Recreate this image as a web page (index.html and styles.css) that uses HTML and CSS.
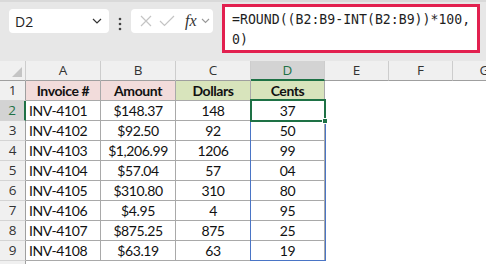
FILE: index.html
```html
<!DOCTYPE html>
<html lang="en">
<head>
    <meta charset="UTF-8">
    <meta name="viewport" content="width=device-width, initial-scale=1.0">
    <title>Cents from Amount</title>
    <link rel="stylesheet" href="styles.css">
</head>
<body>
    <div class="top-edge"></div>

    <div class="formula-bar">
        <div class="name-box">
            <span>D2</span>
            <svg class="chevron" width="10" height="6" viewBox="0 0 10 6"><path d="M1 1 L5 5 L9 1" fill="none" stroke="#333" stroke-width="1.2"/></svg>
        </div>
        <svg class="grip" width="4" height="14" viewBox="0 0 4 14">
            <circle cx="2" cy="2" r="1.3" fill="#444"/>
            <circle cx="2" cy="7" r="1.3" fill="#444"/>
            <circle cx="2" cy="12" r="1.3" fill="#444"/>
        </svg>
        <div class="fx-box">
            <svg width="12" height="12" viewBox="0 0 12 12"><path d="M1 1 L11 11 M11 1 L1 11" stroke="#c4c4c4" stroke-width="1.2"/></svg>
            <svg width="16" height="12" viewBox="0 0 16 12"><path d="M1 6 L5.5 10.5 L15 1" fill="none" stroke="#c4c4c4" stroke-width="1.2"/></svg>
            <span class="fx">fx</span>
            <svg class="chevron" width="9" height="6" viewBox="0 0 9 6"><path d="M1 1 L4.5 4.5 L8 1" fill="none" stroke="#999" stroke-width="1.1"/></svg>
        </div>
        <div class="formula">=ROUND((B2:B9-INT(B2:B9))*100,<br>0)</div>
    </div>

    <div class="grid">
        <div class="hdr corner"><span class="tri"></span></div>
        <div class="hdr">A</div>
        <div class="hdr">B</div>
        <div class="hdr">C</div>
        <div class="hdr active">D</div>
        <div class="hdr">E</div>
        <div class="hdr">F</div>
        <div class="hdr last">G</div>

        <div class="rownum">1</div>
        <div class="cell head pink">Invoice #</div>
        <div class="cell head pink">Amount</div>
        <div class="cell head green">Dollars</div>
        <div class="cell head green">Cents</div>
        <div class="blank"></div><div class="blank"></div><div class="blank"></div>

        <div class="rownum active">2</div>
        <div class="cell left">INV-4101</div>
        <div class="cell">$148.37</div>
        <div class="cell">148</div>
        <div class="cell">37</div>
        <div class="blank"></div><div class="blank"></div><div class="blank"></div>

        <div class="rownum">3</div>
        <div class="cell left">INV-4102</div>
        <div class="cell">$92.50</div>
        <div class="cell">92</div>
        <div class="cell">50</div>
        <div class="blank"></div><div class="blank"></div><div class="blank"></div>

        <div class="rownum">4</div>
        <div class="cell left">INV-4103</div>
        <div class="cell">$1,206.99</div>
        <div class="cell">1206</div>
        <div class="cell">99</div>
        <div class="blank"></div><div class="blank"></div><div class="blank"></div>

        <div class="rownum">5</div>
        <div class="cell left">INV-4104</div>
        <div class="cell">$57.04</div>
        <div class="cell">57</div>
        <div class="cell">04</div>
        <div class="blank"></div><div class="blank"></div><div class="blank"></div>

        <div class="rownum">6</div>
        <div class="cell left">INV-4105</div>
        <div class="cell">$310.80</div>
        <div class="cell">310</div>
        <div class="cell">80</div>
        <div class="blank"></div><div class="blank"></div><div class="blank"></div>

        <div class="rownum">7</div>
        <div class="cell left">INV-4106</div>
        <div class="cell">$4.95</div>
        <div class="cell">4</div>
        <div class="cell">95</div>
        <div class="blank"></div><div class="blank"></div><div class="blank"></div>

        <div class="rownum">8</div>
        <div class="cell left">INV-4107</div>
        <div class="cell">$875.25</div>
        <div class="cell">875</div>
        <div class="cell">25</div>
        <div class="blank"></div><div class="blank"></div><div class="blank"></div>

        <div class="rownum">9</div>
        <div class="cell left">INV-4108</div>
        <div class="cell">$63.19</div>
        <div class="cell">63</div>
        <div class="cell">19</div>
        <div class="blank"></div><div class="blank"></div><div class="blank"></div>

        <div class="rownum"></div>

        <!-- spill range and active cell drawn over the grid -->
        <div class="spill"></div>
        <div class="selection"><span class="handle"></span></div>
    </div>
</body>
</html>
```

FILE: styles.css
```css
* {
    margin: 0;
    padding: 0;
    box-sizing: border-box;
}

body {
    background: #fff;
    font-family: 'Open Sans', 'Noto Sans', sans-serif;
    color: #222;
    width: 486px;
    height: 264px;
    overflow: hidden;
}

.top-edge {
    height: 2px;
    background: #d9d9d9;
}

.formula-bar {
    height: 59px;
    background: #e7e7e7;
    display: flex;
    align-items: flex-start;
}

.name-box {
    margin: 7px 0 0 9px;
    width: 100px;
    height: 24px;
    background: #fff;
    border-radius: 4px;
    display: flex;
    align-items: center;
    justify-content: space-between;
    padding: 0 7px 0 6px;
    font-size: 14px;
}

.grip {
    margin: 15px 0 0 9px;
}

.fx-box {
    margin: 7px 0 0 9px;
    width: 82px;
    height: 24px;
    background: #fff;
    border-radius: 4px;
    display: flex;
    align-items: center;
    gap: 7px;
    padding-left: 9px;
}

.fx {
    font-family: 'Liberation Serif', serif;
    font-style: italic;
    font-size: 16px;
    color: #333;
    margin-left: 3px;
}

.fx-box .chevron {
    margin-left: -3px;
}

.formula {
    margin: 2px 0 0 9px;
    width: 258px;
    height: 49px;
    background: #fff;
    border: 3px solid #e2204f;
    font-family: 'DejaVu Sans Mono', monospace;
    font-size: 13.2px;
    line-height: 20px;
    padding: 3px 0 0 7px;
    color: #1e1e1e;
    white-space: nowrap;
}

.grid {
    position: relative;
    height: 203px;
    overflow: hidden;
    display: grid;
    grid-template-columns: 26px 75px 75px 75px 74px 64px 64px 64px;
    grid-auto-rows: 20px;
    font-family: 'Lato', sans-serif;
    font-size: 14px;
    letter-spacing: -0.4px;
    color: #111;
}

.hdr {
    background: #f0f0f0;
    border-right: 1px solid #cdcdcd;
    border-bottom: 1px solid #9f9f9f;
    font-family: 'Open Sans', sans-serif;
    font-size: 13.5px;
    letter-spacing: 0;
    color: #333;
    text-align: center;
    line-height: 19px;
}

.hdr.active {
    background: #d3d3d3;
    color: #1e7145;
    border-bottom: 2px solid #1e7145;
}

.corner {
    position: relative;
}

.tri {
    position: absolute;
    right: 3px;
    bottom: 3px;
    border-left: 10px solid transparent;
    border-bottom: 10px solid #c4c4c4;
}

.rownum {
    background: #f0f0f0;
    border-right: 1px solid #9f9f9f;
    border-bottom: 1px solid #d4d4d4;
    font-family: 'Open Sans', sans-serif;
    font-size: 13.5px;
    letter-spacing: 0;
    color: #333;
    text-align: center;
    line-height: 19px;
}

.rownum.active {
    background: #d3d3d3;
    color: #1e7145;
    border-right: 2px solid #1e7145;
}

.cell {
    border-right: 1px solid #a9a9a9;
    border-bottom: 1px solid #a9a9a9;
    text-align: center;
    line-height: 20px;
    white-space: nowrap;
    overflow: hidden;
}

.cell.left {
    text-align: left;
    padding-left: 3px;
}

.cell.head {
    font-weight: 700;
}

.pink {
    background: #f2dcdb;
}

.green {
    background: #d8e4bc;
}

.spill {
    position: absolute;
    left: 250px;
    top: 39px;
    width: 76px;
    height: 161px;
    border: 1px solid #4a75c6;
}

.selection {
    position: absolute;
    left: 250px;
    top: 38px;
    width: 76px;
    height: 23px;
    border: 2px solid #1e7145;
}

.handle {
    position: absolute;
    right: -4px;
    bottom: -4px;
    width: 6px;
    height: 6px;
    background: #1e7145;
    border: 1px solid #fff;
}
```
